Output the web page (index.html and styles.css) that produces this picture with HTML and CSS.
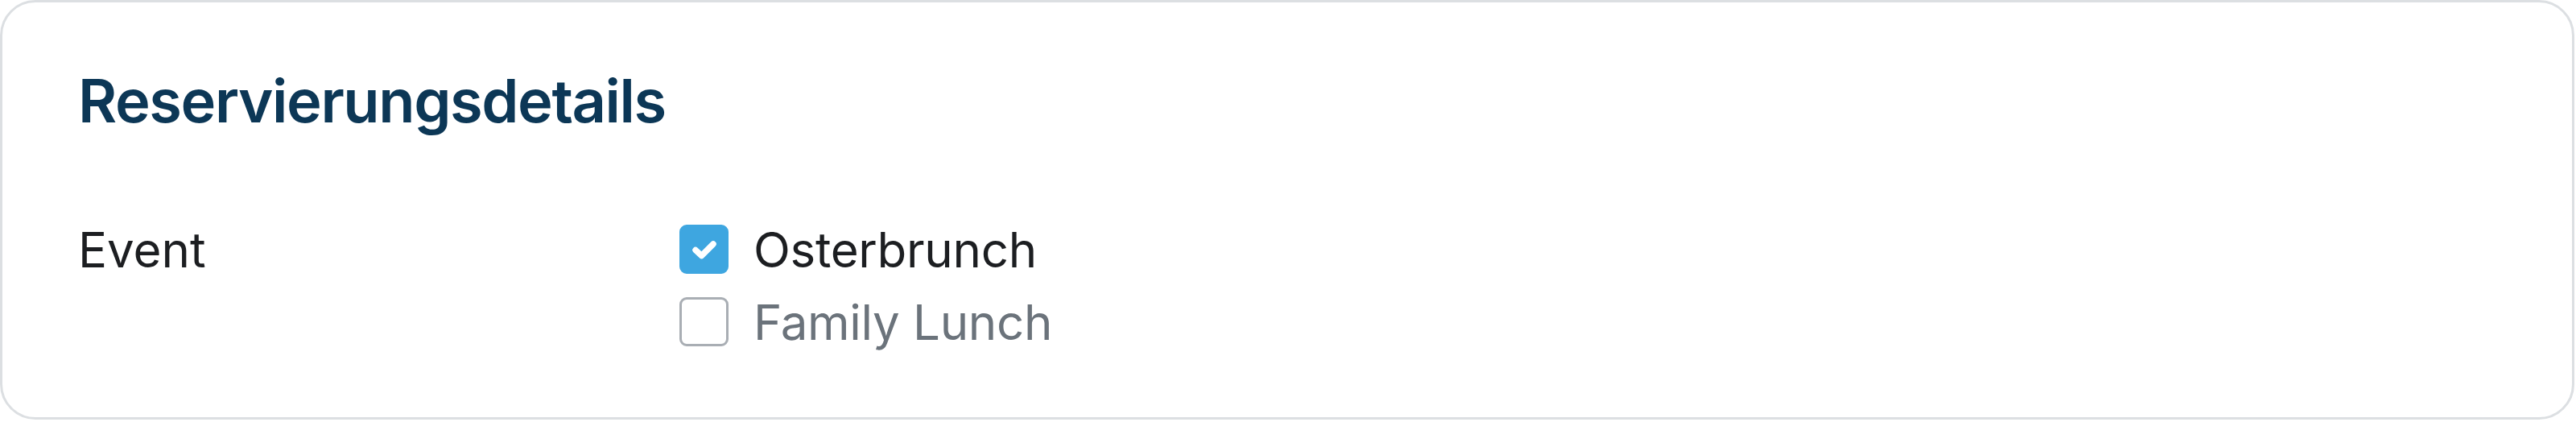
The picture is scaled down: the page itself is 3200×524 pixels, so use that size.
FILE: index.html
```html
<!DOCTYPE html>
<html>
<head>
<title>Reservierungsdetails</title>
<link rel="stylesheet" href="styles.css">
</head>
<body>
<div class="details-card">
    <h2>Reservierungsdetails</h2>
    <div class="field-row">
        <div class="field-label">Event</div>
        <div class="field-options">
            <label class="option checked">
                <span class="box">
                    <svg viewBox="0 0 32 26" width="32" height="26"><polyline points="5,13.5 12.5,20.5 27,6" fill="none" stroke="#fff" stroke-width="7.5" stroke-linecap="round" stroke-linejoin="round"/></svg>
                </span>
                Osterbrunch
            </label>
            <label class="option">
                <span class="box"></span>
                Family Lunch
            </label>
        </div>
    </div>
</div>
</body>
</html>
```

FILE: styles.css
```css
body {
    margin: 0;
    padding: 0 2px 3px 0;
    font-family: Inter, "Noto Sans", sans-serif;
    background-color: #fff;
}

.details-card {
    background-color: #fff;
    border: 3px solid #dcdfe2;
    border-radius: 44px;
    padding: 78px 94px 73px 94px;
}

h2 {
    margin: 0;
    font-size: 74px;
    line-height: 1.2;
    font-weight: 600;
    color: #0c3756;
    letter-spacing: -1.4px;
}

.field-row {
    display: grid;
    grid-template-columns: calc(25% - 4px) 1fr;
    margin-top: 95px;
    font-size: 60px;
    line-height: 90px;
}

.field-label {
    color: #1c1e21;
}

.field-options {
    display: flex;
    flex-direction: column;
}

.option {
    display: flex;
    align-items: center;
    gap: 31px;
    color: #6b737b;
    letter-spacing: -0.3px;
}

.option.checked {
    color: #1c1e21;
}

.box {
    width: 55px;
    height: 55px;
    border: 3px solid #a9aeb4;
    border-radius: 9px;
    background-color: #fff;
    display: flex;
    align-items: center;
    justify-content: center;
}

.option.checked .box {
    background-color: #3ea6e0;
    border-color: #3ea6e0;
}
```
